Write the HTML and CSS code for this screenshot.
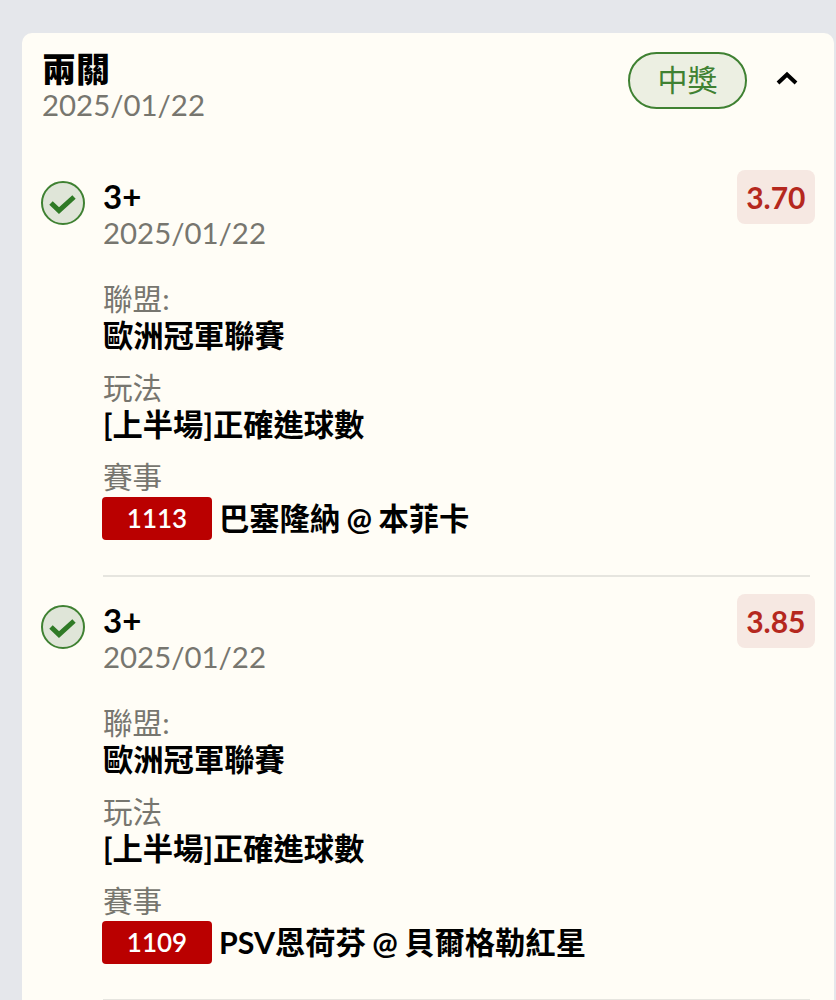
FILE: index.html
```html
<!DOCTYPE html>
<html lang="zh-Hant">
<head>
    <meta charset="UTF-8">
    <meta name="viewport" content="width=device-width, initial-scale=1.0">
    <title>兩關</title>
    <link rel="stylesheet" href="styles.css">
</head>
<body>
    <div class="card">
        <div class="card-header">
            <div>
                <div class="card-title">兩關</div>
                <div class="date">2025/01/22</div>
            </div>
            <div class="header-right">
                <span class="status-pill">中獎</span>
                <svg class="chevron" width="24" height="24" viewBox="0 0 24 24" fill="none" stroke="#000" stroke-width="4">
                    <path d="M3 17 L12 8.5 L21 17"/>
                </svg>
            </div>
        </div>

        <div class="leg">
            <svg class="check" width="46" height="46" viewBox="0 0 46 46">
                <circle cx="23" cy="23" r="21" fill="#dfe5d8" stroke="#3f8132" stroke-width="2"/>
                <path d="M11 23 L19 30.5 L34 17" fill="none" stroke="#2f7a26" stroke-width="5"/>
            </svg>
            <div class="leg-body">
                <div class="leg-top">
                    <div>
                        <div class="leg-name">3+</div>
                        <div class="date">2025/01/22</div>
                    </div>
                    <span class="odds">3.70</span>
                </div>
                <div class="field first">
                    <div class="field-label">聯盟:</div>
                    <div class="field-value">歐洲冠軍聯賽</div>
                </div>
                <div class="field">
                    <div class="field-label">玩法</div>
                    <div class="field-value">[上半場]正確進球數</div>
                </div>
                <div class="field">
                    <div class="field-label">賽事</div>
                    <div class="match">
                        <span class="match-no">1113</span>
                        <span class="field-value match-name">巴塞隆納 @ 本菲卡</span>
                    </div>
                </div>
            </div>
        </div>

        <div class="leg">
            <svg class="check" width="46" height="46" viewBox="0 0 46 46">
                <circle cx="23" cy="23" r="21" fill="#dfe5d8" stroke="#3f8132" stroke-width="2"/>
                <path d="M11 23 L19 30.5 L34 17" fill="none" stroke="#2f7a26" stroke-width="5"/>
            </svg>
            <div class="leg-body">
                <div class="leg-top">
                    <div>
                        <div class="leg-name">3+</div>
                        <div class="date">2025/01/22</div>
                    </div>
                    <span class="odds">3.85</span>
                </div>
                <div class="field first">
                    <div class="field-label">聯盟:</div>
                    <div class="field-value">歐洲冠軍聯賽</div>
                </div>
                <div class="field">
                    <div class="field-label">玩法</div>
                    <div class="field-value">[上半場]正確進球數</div>
                </div>
                <div class="field">
                    <div class="field-label">賽事</div>
                    <div class="match">
                        <span class="match-no">1109</span>
                        <span class="field-value match-name">PSV恩荷芬 @ 貝爾格勒紅星</span>
                    </div>
                </div>
            </div>
        </div>
    </div>
</body>
</html>
```

FILE: styles.css
```css
html, body {
    height: 100%;
    overflow: hidden;
}

body {
    margin: 0;
    padding: 33px 2px 0 22px;
    background-color: #e5e7eb;
    font-family: Lato, "Noto Sans CJK TC", sans-serif;
    color: #000;
}

.card {
    background: #fffdf6;
    border-radius: 10px 10px 0 0;
    padding: 18px 21px 0 20px;
    height: 949px;
    overflow: hidden;
}

.card-header {
    display: flex;
    justify-content: space-between;
    align-items: flex-start;
}

.card-title {
    font-size: 34px;
    font-weight: 900;
    line-height: 36px;
}

.date {
    font-size: 29.4px;
    line-height: 36px;
    color: #77766f;
}

.header-right {
    display: flex;
    align-items: flex-start;
    gap: 28px;
    margin-right: 14px;
}

.status-pill {
    width: 119px;
    height: 57px;
    margin-top: 1px;
    box-sizing: border-box;
    border: 2px solid #3f8132;
    border-radius: 29px;
    background: #ecefe2;
    color: #3f8132;
    font-size: 30px;
    line-height: 51px;
    text-align: center;
}

.chevron {
    margin-top: 15px;
}

.leg {
    display: flex;
    align-items: flex-start;
    gap: 17px;
    margin: 45px 0 0 -2px;
}

.leg + .leg {
    margin-top: 15px;
}

.check {
    flex: none;
    margin-top: 12px;
}

.leg-body {
    flex: 1;
    padding-bottom: 35px;
    border-bottom: 2px solid #e6e5df;
    margin-right: 3px;
}

.leg-top {
    display: flex;
    justify-content: space-between;
    align-items: flex-start;
}

.leg-name {
    font-size: 33px;
    font-weight: 700;
    line-height: 38px;
    margin-top: 9px;
}

.odds {
    margin: 2px -5px 0 0;
    padding: 0 9.5px;
    height: 54px;
    border-radius: 8px;
    background: #f6e8e2;
    color: #b5281e;
    font-size: 30px;
    font-weight: 700;
    line-height: 54px;
}

.field {
    margin-top: 16px;
}

.field.first {
    margin-top: 30px;
}

.field-label {
    font-size: 29.6px;
    line-height: 35px;
    color: #77766f;
}

.field-value {
    font-size: 30.3px;
    font-weight: 700;
    line-height: 38px;
}

.match {
    display: flex;
    align-items: center;
    gap: 7px;
    margin: 3px 0 0 -1px;
    word-spacing: -1px;
}

.match-name {
    margin-bottom: 2px;
}

.match-no {
    width: 110px;
    height: 43px;
    border-radius: 4px;
    background: #ba0000;
    color: #fff;
    font-size: 26px;
    font-weight: 600;
    line-height: 43px;
    text-align: center;
}
```
